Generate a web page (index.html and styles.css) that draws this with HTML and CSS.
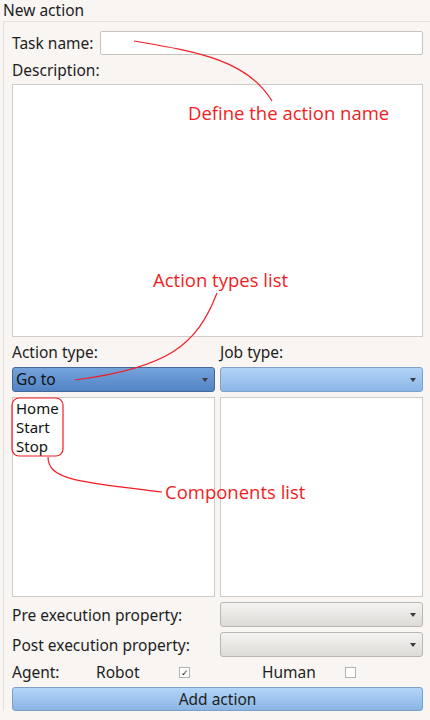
FILE: index.html
```html
<!DOCTYPE html>
<html lang="en">
<head>
  <meta charset="UTF-8">
  <meta name="viewport" content="width=device-width, initial-scale=1.0">
  <title>New action</title>
  <link rel="stylesheet" href="styles.css">
</head>
<body>
  <div class="title">New action</div>
  <div class="group">
    <div class="task-row">
      <label>Task name:</label>
      <div class="input"></div>
    </div>
    <div class="label desc-label">Description:</div>
    <div class="textarea"></div>

    <div class="two-col types">
      <div class="label">Action type:</div>
      <div class="label">Job type:</div>
    </div>
    <div class="two-col">
      <div class="combo combo-active">Go to<span class="arrow"></span></div>
      <div class="combo combo-blue"><span class="arrow"></span></div>
    </div>
    <div class="two-col lists">
      <div class="list">
        <div>Home</div>
        <div>Start</div>
        <div>Stop</div>
      </div>
      <div class="list"></div>
    </div>
    <div class="two-col prop">
      <div class="label">Pre execution property:</div>
      <div class="combo combo-grey"><span class="arrow"></span></div>
    </div>
    <div class="two-col prop">
      <div class="label">Post execution property:</div>
      <div class="combo combo-grey"><span class="arrow"></span></div>
    </div>
    <div class="agent-row">
      <span class="agent">Agent:</span>
      <span class="opt">Robot</span>
      <span class="check checked">&#10003;</span>
      <span class="opt human">Human</span>
      <span class="check"></span>
    </div>
    <div class="button">Add action</div>
  </div>

  <!-- annotations drawn over the form -->
  <svg class="notes" width="430" height="720" viewBox="0 0 430 720">
    <path d="M134 41 C200 52 248 61 272 101" />
    <path d="M217 293 C197 345 168 368 75 380" />
    <rect x="12" y="398" width="51" height="58" rx="7" />
    <path d="M48 457 C48 480 80 482 162 492" />
  </svg>
  <div class="note note-name">Define the action name</div>
  <div class="note note-types">Action types list</div>
  <div class="note note-comp">Components list</div>
</body>
</html>
```

FILE: styles.css
```css
body {
  margin: 0;
  width: 430px;
  height: 720px;
  background-color: #f8f5f2;
  font-family: "Noto Sans", "Open Sans", sans-serif;
  font-size: 15.5px;
  color: #1e1e1e;
  position: relative;
  overflow: hidden;
}
.title {
  height: 21px;
  line-height: 21px;
  padding-left: 3px;
}
.group {
  margin-left: 3px;
  border-top: 1px solid #e3dfdb;
  border-left: 1px solid #e3dfdb;
  padding: 9px 7px 0 8px;
}
.task-row {
  display: flex;
  align-items: center;
  height: 24px;
}
.task-row label {
  width: 88px;
}
.input {
  flex: 1;
  height: 22px;
  background: #fff;
  border: 1px solid #c7c3bf;
  border-radius: 2px;
}
.label {
  line-height: 20px;
}
.desc-label {
  height: 29px;
  display: flex;
  align-items: center;
}
.textarea {
  height: 251px;
  background: #fff;
  border: 1px solid #cfcbc7;
}
.two-col {
  display: grid;
  grid-template-columns: 203px 203px;
  column-gap: 5px;
}
.types {
  height: 30px;
  align-items: center;
}
.combo {
  position: relative;
  height: 23px;
  line-height: 23px;
  border-radius: 3px;
  padding-left: 3px;
}
.combo-active {
  background: linear-gradient(#74a3dc, #5283c4);
  border: 1px solid #44699b;
  color: #111;
}
.combo-blue {
  background: linear-gradient(#b0d4f7, #8cb6e6);
  border: 1px solid #7fa0c8;
}
.combo-grey {
  background: linear-gradient(#f4f3f1, #dcdbd7);
  border: 1px solid #b9b6b2;
}
.arrow {
  position: absolute;
  right: 6px;
  top: 10px;
  border-left: 3.5px solid transparent;
  border-right: 3.5px solid transparent;
  border-top: 4px solid #3a3a3a;
}
.lists {
  margin-top: 5px;
}
.list {
  height: 200px;
  box-sizing: border-box;
  background: #fff;
  border: 1px solid #cfcbc7;
  padding: 1px 0 0 3px;
  font-size: 15px;
  line-height: 19px;
  color: #111;
}
.prop {
  margin-top: 5px;
  align-items: center;
}
.agent-row {
  display: flex;
  align-items: center;
  height: 30px;
}
.agent {
  width: 84px;
}
.opt {
  width: 83px;
}
.check {
  width: 9px;
  height: 9px;
  border: 1px solid #b5b2ae;
  background: #fff;
  font-size: 9px;
  line-height: 9px;
  text-align: center;
  color: #222;
}
.check.checked {
  margin-right: 72px;
}
.button {
  height: 22px;
  line-height: 22px;
  text-align: center;
  background: linear-gradient(#b2d6f8, #8ab4e4);
  border: 1px solid #7c9ec7;
  border-radius: 3px;
}
.notes {
  position: absolute;
  left: 0;
  top: 0;
  pointer-events: none;
}
.notes path, .notes rect {
  fill: none;
  stroke: #f21c24;
  stroke-width: 1.2;
}
.note {
  position: absolute;
  color: #f21c24;
  font-family: "Open Sans", sans-serif;
  font-size: 18.5px;
  line-height: 22px;
}
.note-name {
  left: 188px;
  top: 102px;
}
.note-types {
  left: 153px;
  top: 269px;
}
.note-comp {
  left: 165px;
  top: 481px;
}
```
